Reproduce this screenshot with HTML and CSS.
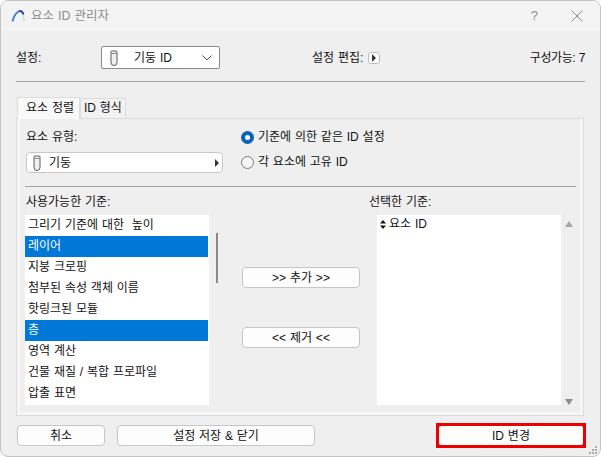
FILE: index.html
```html
<!DOCTYPE html>
<html lang="ko">
<head>
<meta charset="utf-8">
<title>요소 ID 관리자</title>
<link rel="stylesheet" href="styles.css">
</head>
<body>
<div class="window">
  <header class="titlebar">
    <svg class="app-icon" width="15" height="14" viewBox="0 0 15 14"><path d="M8 2.2 C10 1.6 11.6 2.6 12.4 5.5" fill="none" stroke="#1f3f8f" stroke-width="2"/><path d="M12.5 6 L13 12.5" fill="none" stroke="#c5d2ea" stroke-width="1"/><path d="M1.5 12.5 C2.5 8 4.5 3.5 8.5 2.1" fill="none" stroke="#4f7fd8" stroke-width="2"/></svg>
    <span class="title">요소 ID 관리자</span>
    <span class="help">?</span>
    <svg class="close" width="12" height="12" viewBox="0 0 12 12"><path d="M.5.5l11 11M11.5.5l-11 11" stroke="#8a8a8a" stroke-width="1" fill="none"/></svg>
  </header>
  <main class="body">
    <div class="settings-row">
      <span class="settings-label">설정:</span>
      <div class="combo">
        <svg class="column-icon" width="8" height="16" viewBox="0 0 8 16"><path d="M1 2a1 1 0 0 1 1-1h4a1 1 0 0 1 1 1v10.5a3 3 0 0 1-6 0z" fill="#f0f0f0" stroke="#5a5a5a"/><path d="M1 3.5h6" stroke="#8a8a8a"/></svg>
        <span class="combo-text">기둥 ID</span>
        <svg class="chev" width="10" height="6" viewBox="0 0 10 6"><path d="M.5.5L5 5 9.5.5" fill="none" stroke="#555"/></svg>
      </div>
      <span class="edit-label">설정 편집:</span>
      <span class="edit-btn"><i class="tri-right"></i></span>
      <span class="count">구성가능: 7</span>
    </div>
    <div class="rule"></div>
    <div class="tabs">
      <span class="tab active">요소 정렬</span>
      <span class="tab">ID 형식</span>
    </div>
    <section class="panel">
      <div class="panel-inner">
        <div class="type-row">
          <div class="type-col">
            <div class="type-label">요소 유형:</div>
            <div class="type-select">
              <svg class="column-icon" width="8" height="16" viewBox="0 0 8 16"><path d="M1 2a1 1 0 0 1 1-1h4a1 1 0 0 1 1 1v10.5a3 3 0 0 1-6 0z" fill="#f0f0f0" stroke="#5a5a5a"/><path d="M1 3.5h6" stroke="#8a8a8a"/></svg>
              <span class="type-text">기둥</span>
              <i class="tri-right"></i>
            </div>
          </div>
          <div class="radio-col">
            <div class="radio-row"><span class="radio on"></span><span>기준에 의한 같은 ID 설정</span></div>
            <div class="radio-row"><span class="radio"></span><span>각 요소에 고유 ID</span></div>
          </div>
        </div>
        <div class="rule inner-rule"></div>
        <div class="lists">
          <div class="list-col">
            <div class="list-label">사용가능한 기준:</div>
            <ul class="list">
              <li>그리기 기준에 대한&nbsp; 높이</li>
              <li class="sel">레이어</li>
              <li>지붕 크로핑</li>
              <li>첨부된 속성 객체 이름</li>
              <li>핫링크된 모듈</li>
              <li class="sel">층</li>
              <li>영역 계산</li>
              <li>건물 재질 / 복합 프로파일</li>
              <li>압출 표면</li>
            </ul>
          </div>
          <div class="middle">
            <div class="thumb"></div>
            <div class="move-btns">
              <button class="btn move">&gt;&gt; 추가 &gt;&gt;</button>
              <button class="btn move">&lt;&lt; 제거 &lt;&lt;</button>
            </div>
          </div>
          <div class="list-col">
            <div class="list-label">선택한 기준:</div>
            <ul class="list">
              <li class="chosen"><svg class="updown" width="6" height="9" viewBox="0 0 6 9"><path d="M3 0l3 3.5H0zM3 9L0 5.5h6z" fill="#111"/></svg>요소 ID</li>
            </ul>
          </div>
          <div class="arrows">
            <i class="arrow up"></i>
            <i class="arrow down"></i>
          </div>
        </div>
      </div>
    </section>
    <footer class="actions">
      <button class="btn cancel">취소</button>
      <button class="btn save">설정 저장 &amp; 닫기</button>
      <button class="btn primary">ID 변경</button>
    </footer>
    <svg class="grip" width="9" height="9" viewBox="0 0 9 9"><path d="M6 0h2v2H6zM3 3h2v2H3zM6 3h2v2H6zM0 6h2v2H0zM3 6h2v2H3zM6 6h2v2H6z" fill="#aaa"/></svg>
  </main>
</div>
</body>
</html>
```
FILE: styles.css
```css
* { box-sizing: border-box; }
html, body { margin: 0; padding: 0; background: #fff; }
body {
  width: 602px;
  height: 457px;
  overflow: hidden;
  font-family: "Liberation Sans", "Noto Sans CJK KR", sans-serif;
  font-size: 12px;
  line-height: 14px;
  color: #111;
  word-spacing: .5px;
}
.window {
  width: 601px;
  height: 457px;
  border: 1px solid #c4c4c4;
  border-radius: 8px;
  background: #efefef;
  overflow: hidden;
  display: flex;
  flex-direction: column;
}
.titlebar {
  height: 30px;
  flex: none;
  background: #f3f3f3;
  display: flex;
  align-items: center;
  padding-left: 10px;
}
.title { margin-left: 5px; font-size: 12.5px; color: #8c8c8c; }
.help { margin-left: auto; font-size: 13px; color: #8c8c8c; }
.close { margin: 0 17px 0 33px; }

.body { flex: 1; position: relative; padding: 15px 15px 0; display: flex; flex-direction: column; }

.settings-row { display: flex; align-items: center; height: 23px; }
.settings-label { width: 85px; }
.combo {
  width: 119px; height: 23px;
  background: #fff;
  border: 1px solid #8a8a8a;
  border-radius: 2px;
  display: flex; align-items: center;
  padding: 0 5px 0 8px;
}
.combo-text { margin-left: 16px; }
.chev { margin-left: auto; margin-right: 2px; }
.edit-label { margin-left: 92px; }
.edit-btn {
  width: 12px; height: 12px;
  margin-left: 5px;
  background: #fff;
  border: 1px solid #bdbdbd;
  border-radius: 3px;
  display: flex; align-items: center; justify-content: center;
}
.tri-right {
  display: block;
  border-left: 4px solid #333;
  border-top: 4px solid transparent;
  border-bottom: 4px solid transparent;
}
.count { margin-left: auto; letter-spacing: -.4px; }

.rule { height: 1px; background: #a3a3a3; margin-top: 12px; flex: none; }

.tabs { display: flex; align-items: flex-end; margin-top: 15px; padding-left: 1px; height: 21px; position: relative; z-index: 1; }
.tab {
  height: 20px;
  padding: 0 3px;
  background: #f2f2f2;
  border: 1px solid #dcdcdc;
  border-bottom: 0;
  line-height: 18px;
}
.tab.active {
  width: 63px; height: 22px;
  margin-bottom: -1px;
  padding: 0 0 0 8px;
  background: #f9f9f9;
  line-height: 20px;
}
.panel {
  width: 568px;
  height: 298px;
  flex: none;
  border: 1px solid #dcdcdc;
  background: #f6f6f6;
  padding: 0 3px 3px;
}
.panel-inner { height: 100%; background: #efefef; padding: 0 4px 0 5px; display: flex; flex-direction: column; }

.type-row { display: flex; height: 67px; flex: none; }
.type-col { width: 216px; padding-top: 11px; }
.type-label { padding-left: 1px; }
.type-select {
  width: 197px; height: 21px;
  margin: 8px 0 0 1px;
  background: #fff;
  border: 1px solid #c8c8c8;
  border-radius: 4px;
  display: flex; align-items: center;
  padding: 0 3px 0 6px;
}
.type-text { margin-left: 8px; }
.type-select .tri-right { margin-left: auto; }
.radio-col { padding-top: 11px; display: flex; flex-direction: column; gap: 11px; }
.radio-row { display: flex; align-items: center; gap: 4px; height: 14px; }
.radio { width: 13px; height: 13px; border-radius: 50%; border: 1px solid #7a7a7a; background: #f5f5f5; flex: none; }
.radio.on { border: 4px solid #0a63b8; background: #fff; }

.inner-rule { margin-top: 0; }

.lists { display: grid; grid-template-columns: 184px 168px 184px 1fr; flex: 1; }
.list-col { display: flex; flex-direction: column; }
.list-label { height: 28px; padding: 8px 0 0 1px; }
.list-col:nth-child(3) .list-label { margin-left: -9px; }
.list { list-style: none; margin: 0; padding: 0; background: #fff; height: 190px; }
.list li { height: 21px; line-height: 21px; padding-left: 3px; margin-right: 1px; }
.list li.sel { background: #0078d7; color: #fff; }
.list li.chosen { display: flex; align-items: center; gap: 3px; padding-left: 3px; line-height: 14px; height: 18px; }
.updown { flex: none; }

.middle { display: flex; }
.thumb { width: 2px; height: 50px; margin: 46px 0 0 7px; background: #8a8a8a; flex: none; }
.move-btns { margin: 80px 0 0 24px; display: flex; flex-direction: column; gap: 39px; }

.btn {
  height: 21px;
  padding: 0;
  background: #fdfdfd;
  border: 1px solid #c6c6c6;
  border-radius: 4px;
  font: inherit;
  color: #111;
  word-spacing: inherit;
}
.move { width: 118px; }

.arrows { display: flex; flex-direction: column; justify-content: space-between; padding: 34px 0 5px 4px; height: 223px; }
.arrow { display: block; width: 0; border-left: 4.5px solid transparent; border-right: 4.5px solid transparent; }
.arrow.up { border-bottom: 6px solid #a8a8a8; }
.arrow.down { border-top: 6px solid #8c8c8c; }

.actions { display: flex; margin-top: 9px; padding-left: 1px; }
.cancel { width: 88px; }
.save { width: 198px; margin-left: 12px; }
.primary {
  position: relative;
  width: 146px;
  margin-left: 123px;
  border-color: #3f5a9a;
  border-radius: 3px;
}
.primary::after {
  content: "";
  position: absolute;
  inset: -3px;
  border: 3px solid #ef0000;
}
.grip { position: absolute; right: 2px; bottom: 1px; }
```
